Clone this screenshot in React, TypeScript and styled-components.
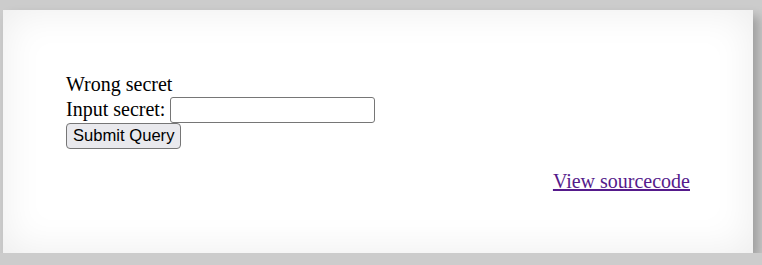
import React from "react";
import styled, {createGlobalStyle} from "styled-components";

const GlobalStyle = createGlobalStyle`
  html, body {
    margin: 0;
    padding: 0;
    background-color: #cccccc;
  }
`;

const Page = styled.div`
  padding: 10px 0 0 3px;
  font-family: "Liberation Serif", "Times New Roman", serif;
  font-size: 20px;
  color: #000000;
`;

const Panel = styled.div`
  box-sizing: border-box;
  width: 750px;
  height: 243px;
  padding: 63px 63px;
  background-color: #ffffff;
  box-shadow: inset 0 0 40px rgba(0, 0, 0, 0.08), 6px 6px 10px rgba(0, 0, 0, 0.22);
`;

const Message = styled.div`
  line-height: 23px;
`;

const SecretForm = styled.form`
  margin: 0;
`;

const Row = styled.div`
  display: flex;
  align-items: center;
  gap: 5px;
  height: 27px;
`;

const Label = styled.label`
  line-height: 23px;
`;

const SecretInput = styled.input`
  box-sizing: border-box;
  width: 205px;
  height: 26px;
  padding: 1px 3px;
  border: 1px solid #767676;
  border-radius: 3px;
  background: #ffffff;
  font-family: "Liberation Sans", Arial, sans-serif;
  font-size: 16px;
`;

const SubmitButton = styled.button`
  display: block;
  box-sizing: border-box;
  height: 26px;
  padding: 0 6px;
  border: 1px solid #767676;
  border-radius: 4px;
  background-color: #e9e9ed;
  color: #000000;
  font-family: "Liberation Sans", Arial, sans-serif;
  font-size: 16.6px;
`;

const Footer = styled.div`
  margin-top: 21px;
  text-align: right;
`;

const SourceLink = styled.a`
  color: #551a8b;
  text-decoration: underline;
`;

export default function App() {
  return (
    <>
      <GlobalStyle/>
      <Page>
        <Panel>
          <Message>Wrong secret</Message>
          <SecretForm onSubmit={(e) => e.preventDefault()}>
            <Row>
              <Label htmlFor="secret">Input secret:</Label>
              <SecretInput id="secret" name="secret" type="text"/>
            </Row>
            <SubmitButton type="submit">Submit Query</SubmitButton>
          </SecretForm>
          <Footer>
            <SourceLink href="#source">View sourcecode</SourceLink>
          </Footer>
        </Panel>
      </Page>
    </>
  );
}
